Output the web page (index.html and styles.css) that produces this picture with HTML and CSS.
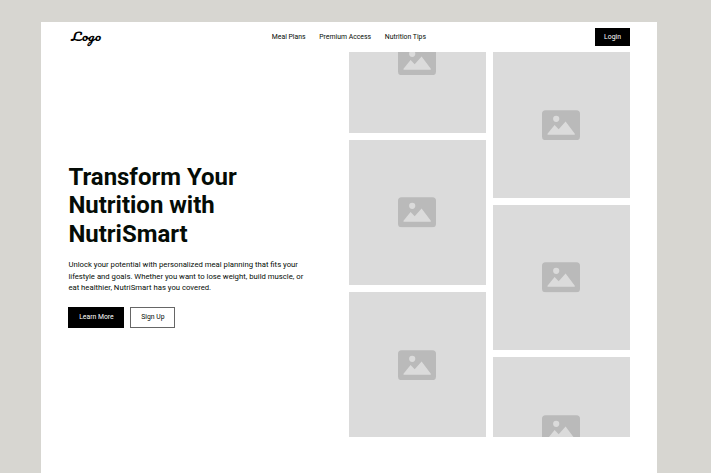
FILE: index.html
```html
<!DOCTYPE html>
<html lang="en">
<head>
<meta charset="utf-8">
<title>NutriSmart</title>
<link rel="stylesheet" href="styles.css">
</head>
<body>
<svg width="0" height="0" class="defs" aria-hidden="true">
  <symbol id="image" viewBox="0 0 38 30">
    <path fill="#bababa" fill-rule="evenodd" d="M3.5 0h31A3.5 3.5 0 0 1 38 3.5v23a3.5 3.5 0 0 1-3.5 3.5h-31A3.5 3.5 0 0 1 0 26.500v-23A3.500 3.500 0 0 1 3.500 0zM14.200 5.500a3.100 3.100 0 1 0 0 6.200a3.100 3.100 0 0 0 0-6.200zM5.500 24.500H32.800V23.600L23.600 11.200L16.700 19L12.600 14.900L5.500 23.600z"/>
  </symbol>
</svg>
<div class="page">
  <header class="nav">
    <a class="logo">Logo</a>
    <nav class="links"><a>Meal Plans</a><a>Premium Access</a><a>Nutrition Tips</a></nav>
    <a class="btn login">Login</a>
  </header>
  <main class="hero">
    <section class="copy">
      <h1>Transform Your<br>Nutrition with<br>NutriSmart</h1>
      <p>Unlock your potential with personalized meal planning that fits your<br>lifestyle and goals. Whether you want to lose weight, build muscle, or<br>eat healthier, NutriSmart has you covered.</p>
      <div class="actions"><a class="btn">Learn More</a><a class="btn outline">Sign Up</a></div>
    </section>
    <section class="gallery">
      <div class="column raised">
        <div class="tile"><svg><use href="#image"/></svg></div>
        <div class="tile"><svg><use href="#image"/></svg></div>
        <div class="tile"><svg><use href="#image"/></svg></div>
      </div>
      <div class="column">
        <div class="tile"><svg><use href="#image"/></svg></div>
        <div class="tile"><svg><use href="#image"/></svg></div>
        <div class="tile"><svg><use href="#image"/></svg></div>
      </div>
    </section>
  </main>
</div>
</body>
</html>
```
FILE: styles.css
```css
* { box-sizing: border-box; }
body {
  margin: 0;
  height: 473px;
  overflow: hidden;
  padding: 21.700px 54px 0 41px;
  background: #d7d6d1;
  font-family: Roboto, "Liberation Sans", sans-serif;
  color: #050c06;
}
.defs { position: absolute; }
.page { height: 452px; background: #fff; }
.nav {
  display: grid;
  grid-template-columns: 1fr auto 1fr;
  align-items: center;
  height: 30.800px;
  padding: 0 27px 0 30px;
}
.logo {
  justify-self: start;
  padding-bottom: 2px;
  font: 14.500px/16px "Pacifico", "Dancing Script", cursive;
  color: #000;
  transform: translateY(0.500px) scale(0.960, 0.780) skewX(-6deg);
}
.links { display: flex; gap: 13.700px; margin: 0 3.200px 0 0; font-size: 6.860px; }
.btn {
  display: flex;
  align-items: center;
  justify-content: center;
  background: #000;
  color: #fff;
  border: 1px solid #000;
  font-size: 6.840px;
  width: 56px;
  height: 21.500px;
}
.login { width: 35px; height: 18px; justify-self: end; }
.outline { width: 45px; background: #fff; color: #050c06; border-color: #666; }
.hero { display: flex; justify-content: space-between; height: 385px; padding: 0 27px 0 27.400px; }
.copy { display: flex; flex-direction: column; justify-content: center; padding-top: 0.700px; }
h1 { margin: 0 0 10.300px; font-size: 23.960px; line-height: 28.750px; font-weight: 700; }
p { margin: 0 0 12.900px; font-size: 7.720px; line-height: 11.550px; white-space: nowrap; }
.actions { display: flex; gap: 6px; }
.gallery { display: flex; gap: 7px; overflow: hidden; }
.column { display: flex; flex-direction: column; gap: 6.840px; width: 137px; }
.raised { margin-top: -65.200px; }
.tile {
  flex: none;
  display: flex;
  align-items: center;
  justify-content: center;
  height: 145.500px;
  background: #dbdbdb;
}
.tile svg { width: 38px; height: 30.400px; margin-right: 0.500px; }
```
